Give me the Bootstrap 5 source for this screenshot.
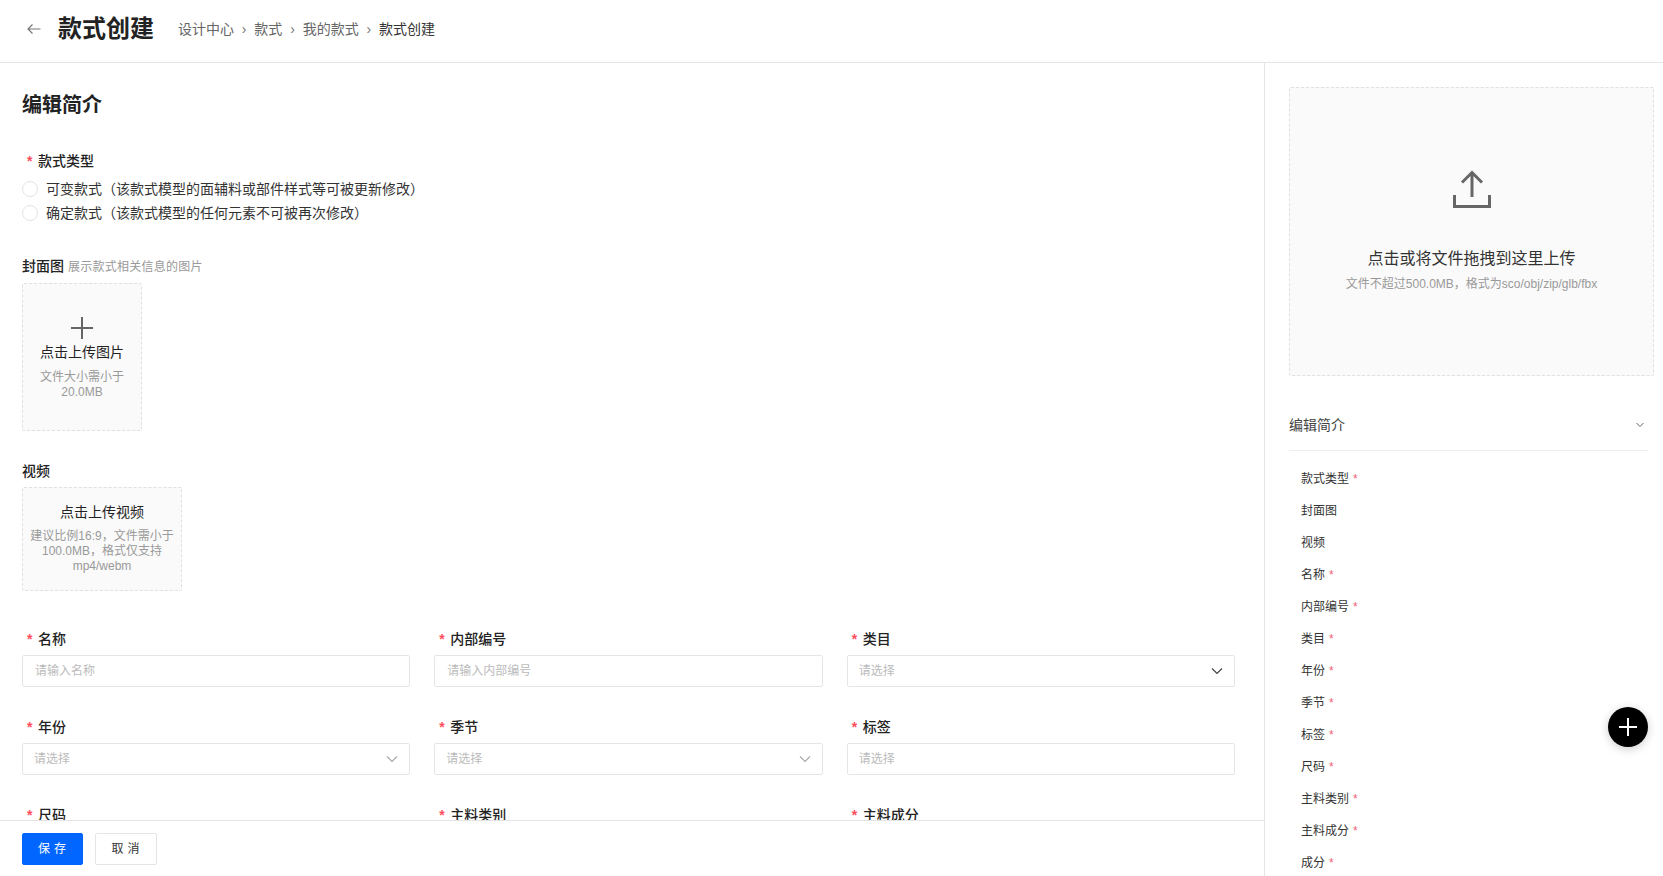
<!DOCTYPE html>
<html lang="zh-CN">
<head>
  <meta charset="UTF-8">
  <title>款式创建</title>
  <link rel="stylesheet" href="https://cdn.jsdelivr.net/npm/bootstrap@5.3.0/dist/css/bootstrap.min.css">
  <style>
    body { font-family: "Liberation Sans", "Noto Sans CJK SC", sans-serif; color: #222; font-size: 14px; height: 100vh; overflow: hidden; }
    .top-bar { height: 63px; border-bottom: 1px solid #e5e5e5; padding: 0 0 4px 27px; }
    .back-icon { margin-right: 17px; }
    .page-title { font-size: 24px; font-weight: 700; line-height: 32px; margin: 0 24px 0 0; color: #222; }
    .crumbs { --bs-breadcrumb-divider: '›'; --bs-breadcrumb-item-padding-x: 7.85px; --bs-breadcrumb-margin-bottom: 0; --bs-breadcrumb-divider-color: #777; --bs-breadcrumb-item-active-color: #333; font-size: 14px; color: #666; }
    .crumbs .breadcrumb-item { color: #666; }
    .crumbs .breadcrumb-item.active { color: #333; }
    .main-area { height: 813px; }
    .left-pane { width: 1265px; border-right: 1px solid #e5e5e5; }
    .form-scroll { height: 757px; padding: 28px 29px 0 22px; }
    .sec-title { font-size: 20px; font-weight: 700; line-height: 28px; margin-bottom: 32px; color: #222; }
    .fld-label { font-size: 14px; font-weight: 500; line-height: 20px; color: #222; margin-bottom: 6px; display: block; }
    .req { color: #ff4d5e; display: inline-block; width: 11px; margin-left: 5px; font-weight: 700; }
    .hint { font-size: 12px; font-weight: 400; color: #999; margin-left: 4px; letter-spacing: .25px; }
    .radio-row { min-height: 24px; line-height: 24px; padding-left: 24px; margin-bottom: 0; }
    .radio-row .form-check-input { width: 16px; height: 16px; margin-top: 4px; margin-left: -24px; border-color: #e4e4e4; }
    .radio-row .form-check-label { color: #333; }
    .radio-block { margin-bottom: 31px; }
    .up-box { background: #fafafa; border: 1px dashed #e0e0e0; border-radius: 2px; text-align: center; }
    .up-cover { width: 120px; height: 148px; margin-bottom: 30px; padding: 33px 6px 0; }
    .up-video { width: 160px; height: 104px; margin-bottom: 38px; padding: 14px 6px 0; }
    .up-title { font-size: 14px; line-height: 20px; color: #222; }
    .up-note { font-size: 12px; line-height: 15px; color: #999; }
    .up-cover svg { display: block; margin: 0 auto 3px; }
    .up-cover .up-note { margin-top: 8px; }
    .up-video .up-note { margin-top: 7px; }
    .fld-row { --bs-gutter-x: 24px; }
    .fld-item { margin-bottom: 30px; }
    .fld-box { height: 32px; border: 1px solid #e5e5e5; border-radius: 2px; font-size: 12px; padding: 0 12px; color: #222; }
    .fld-box::placeholder { color: #bbb; }
    .fld-box:focus { box-shadow: none; border-color: #e5e5e5; }
    .fake-select { color: #bbb; padding: 0 11px 0 11px; }
    .bottom-bar { height: 56px; border-top: 1px solid #e5e5e5; padding: 12px 22px; background: #fff; }
    .act-btn { height: 32px; font-size: 12px; letter-spacing: 4px; border-radius: 2px; padding: 0 0 0 3px; }
    .act-save { width: 61px; background: #0066ff; border-color: #0066ff; }
    .act-cancel { width: 62px; border: 1px solid #e5e5e5; color: #333; background: #fff; margin-left: 12px; }
    .right-pane { padding: 24px 9px 0 24px; }
    .drop-zone { height: 289px; margin-bottom: 38px; padding-top: 82px; }
    .drop-title { font-size: 16px; line-height: 24px; color: #333; margin-top: 39px; }
    .drop-note { font-size: 12px; line-height: 16px; color: #999; margin-top: 5px; }
    .outline-head { height: 37px; width: 359px; border-bottom: 1px solid #eee; padding: 0 4px 14px 0; color: #444; line-height: 22px; margin-bottom: 12px; }
    .outline-list { --bs-list-group-bg: transparent; --bs-list-group-border-width: 0; --bs-list-group-item-padding-x: 12px; --bs-list-group-item-padding-y: 0; }
    .outline-list .list-group-item { font-size: 12px; line-height: 32px; height: 32px; color: #333; }
    .req-mini { color: #f0607a; margin-left: 4px; }
    .fab { width: 40px; height: 40px; right: 15px; top: 707px; background: #000; box-shadow: 0 2px 10px rgba(0,0,0,.2); z-index: 5; }
  </style>
</head>
<body>

  <header class="top-bar d-flex align-items-center">
    <svg class="back-icon" width="14" height="12" viewBox="0 0 14 12" fill="none" stroke="#777" stroke-width="1.2"><path d="M13.5 6H1M5.5 1.5L1 6l4.5 4.5"/></svg>
    <h1 class="page-title">款式创建</h1>
    <nav>
      <ol class="breadcrumb crumbs">
        <li class="breadcrumb-item">设计中心</li>
        <li class="breadcrumb-item">款式</li>
        <li class="breadcrumb-item">我的款式</li>
        <li class="breadcrumb-item active">款式创建</li>
      </ol>
    </nav>
  </header>

  <div class="main-area d-flex position-relative">
    <div class="left-pane d-flex flex-column flex-shrink-0">
      <div class="form-scroll overflow-hidden">
        <div class="sec-title">编辑简介</div>

        <label class="fld-label"><span class="req">*</span>款式类型</label>
        <div class="radio-block">
          <div class="form-check radio-row">
            <input class="form-check-input" type="radio" name="kind" id="kind1">
            <label class="form-check-label" for="kind1">可变款式（该款式模型的面辅料或部件样式等可被更新修改）</label>
          </div>
          <div class="form-check radio-row">
            <input class="form-check-input" type="radio" name="kind" id="kind2">
            <label class="form-check-label" for="kind2">确定款式（该款式模型的任何元素不可被再次修改）</label>
          </div>
        </div>

        <label class="fld-label">封面图<span class="hint">展示款式相关信息的图片</span></label>
        <div class="up-box up-cover">
          <svg width="22" height="22" viewBox="0 0 22 22" stroke="#666" stroke-width="2"><path d="M11 0v22M0 11h22"/></svg>
          <div class="up-title">点击上传图片</div>
          <div class="up-note">文件大小需小于<br>20.0MB</div>
        </div>

        <label class="fld-label">视频</label>
        <div class="up-box up-video">
          <div class="up-title">点击上传视频</div>
          <div class="up-note">建议比例16:9，文件需小于100.0MB，格式仅支持mp4/webm</div>
        </div>

        <div class="row fld-row">
          <div class="col-4 fld-item">
            <label class="fld-label"><span class="req">*</span>名称</label>
            <input class="form-control fld-box" placeholder="请输入名称">
          </div>
          <div class="col-4 fld-item">
            <label class="fld-label"><span class="req">*</span>内部编号</label>
            <input class="form-control fld-box" placeholder="请输入内部编号">
          </div>
          <div class="col-4 fld-item">
            <label class="fld-label"><span class="req">*</span>类目</label>
            <div class="fld-box fake-select d-flex align-items-center justify-content-between">
              <span>请选择</span>
              <svg width="12" height="8" viewBox="0 0 12 8" fill="none" stroke="#444" stroke-width="1.2"><path d="M1 1.5l5 5 5-5"/></svg>
            </div>
          </div>
          <div class="col-4 fld-item">
            <label class="fld-label"><span class="req">*</span>年份</label>
            <div class="fld-box fake-select d-flex align-items-center justify-content-between">
              <span>请选择</span>
              <svg width="12" height="8" viewBox="0 0 12 8" fill="none" stroke="#aaa" stroke-width="1.2"><path d="M1 1.5l5 5 5-5"/></svg>
            </div>
          </div>
          <div class="col-4 fld-item">
            <label class="fld-label"><span class="req">*</span>季节</label>
            <div class="fld-box fake-select d-flex align-items-center justify-content-between">
              <span>请选择</span>
              <svg width="12" height="8" viewBox="0 0 12 8" fill="none" stroke="#aaa" stroke-width="1.2"><path d="M1 1.5l5 5 5-5"/></svg>
            </div>
          </div>
          <div class="col-4 fld-item">
            <label class="fld-label"><span class="req">*</span>标签</label>
            <input class="form-control fld-box fake-select" placeholder="请选择">
          </div>
          <div class="col-4 fld-item">
            <label class="fld-label"><span class="req">*</span>尺码</label>
            <input class="form-control fld-box" placeholder="请选择">
          </div>
          <div class="col-4 fld-item">
            <label class="fld-label"><span class="req">*</span>主料类别</label>
            <input class="form-control fld-box" placeholder="请选择">
          </div>
          <div class="col-4 fld-item">
            <label class="fld-label"><span class="req">*</span>主料成分</label>
            <input class="form-control fld-box" placeholder="请选择">
          </div>
        </div>
      </div>

      <div class="bottom-bar d-flex">
        <button class="btn btn-primary act-btn act-save">保存</button>
        <button class="btn act-btn act-cancel">取消</button>
      </div>
    </div>

    <aside class="right-pane flex-grow-1 overflow-hidden">
      <div class="up-box drop-zone">
        <svg width="38" height="38" viewBox="0 0 38 38" fill="none" stroke="#666" stroke-width="3"><path d="M19 27V3M9 12.5L19 2.5l10 10M1.5 25v11.5h35V25"/></svg>
        <div class="drop-title">点击或将文件拖拽到这里上传</div>
        <div class="drop-note">文件不超过500.0MB，格式为sco/obj/zip/glb/fbx</div>
      </div>

      <div class="outline-head d-flex justify-content-between">
        <span>编辑简介</span>
        <svg class="mt-2" width="8" height="6" viewBox="0 0 8 6" fill="none" stroke="#666"><path d="M.5 1l3.5 3.5L7.500 1"/></svg>
      </div>

      <ul class="list-group outline-list">
        <li class="list-group-item">款式类型<span class="req-mini">*</span></li>
        <li class="list-group-item">封面图</li>
        <li class="list-group-item">视频</li>
        <li class="list-group-item">名称<span class="req-mini">*</span></li>
        <li class="list-group-item">内部编号<span class="req-mini">*</span></li>
        <li class="list-group-item">类目<span class="req-mini">*</span></li>
        <li class="list-group-item">年份<span class="req-mini">*</span></li>
        <li class="list-group-item">季节<span class="req-mini">*</span></li>
        <li class="list-group-item">标签<span class="req-mini">*</span></li>
        <li class="list-group-item">尺码<span class="req-mini">*</span></li>
        <li class="list-group-item">主料类别<span class="req-mini">*</span></li>
        <li class="list-group-item">主料成分<span class="req-mini">*</span></li>
        <li class="list-group-item">成分<span class="req-mini">*</span></li>
      </ul>
    </aside>
  </div>

  <div class="fab position-fixed rounded-circle d-flex align-items-center justify-content-center">
    <svg width="18" height="18" viewBox="0 0 18 18" stroke="#fff" stroke-width="2"><path d="M9 0v18M0 9h18"/></svg>
  </div>

  <script src="https://cdn.jsdelivr.net/npm/bootstrap@5.3.0/dist/js/bootstrap.bundle.min.js"></script>
</body>
</html>
